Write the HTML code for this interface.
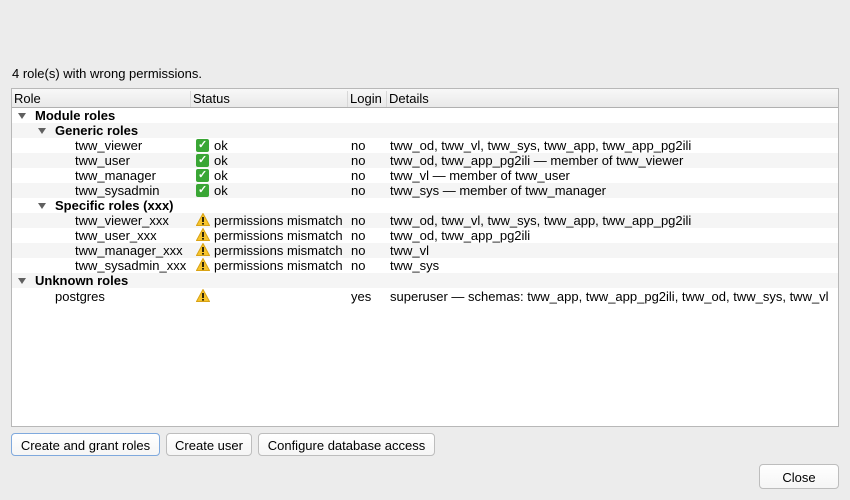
<!DOCTYPE html>
<html><head><meta charset="utf-8"><style>
body{margin:0;width:850px;height:500px;background:#ececec;font-family:"Liberation Sans",Arial,sans-serif;font-size:13px;color:#000;position:relative;overflow:hidden}
.abs{position:absolute}
.frame{left:11px;top:88px;width:826px;height:337px;border:1px solid #b8b8b8;background:#fff}
.hdr{position:absolute;left:0;top:0;width:826px;height:18px;background:linear-gradient(#f8f8f8,#e9e9e9);border-bottom:1px solid #b0b0b0}
.hdr span{position:absolute;top:2px;height:16px;padding-left:2px;border-left:1px solid #d8d8d8}
.row{position:absolute;left:0;width:826px;height:15px;line-height:15px;white-space:nowrap}
.row.g{background:#f5f5f5}
.row span{position:absolute;top:0}
.b{font-weight:bold}
.tri{display:block;width:0;height:0;border-left:4px solid transparent;border-right:4px solid transparent;border-top:6px solid #606060;position:absolute;top:5px}
.ok{display:block;width:13px;height:13px;background:#3aa635;border-radius:2px;position:absolute;top:1px;left:184px}
.warn{position:absolute;left:184px;top:0;display:block}
.btn{position:absolute;height:23px;border:1px solid #bdbdbd;border-radius:4px;background:linear-gradient(#fff,#f5f5f5);text-align:center;line-height:23px;font-size:13px;box-sizing:border-box}
</style></head><body>
<div class="abs" style="left:12px;top:66px">4 role(s) with wrong permissions.</div>
<div class="abs frame">
 <div class="hdr"><span style="left:0;border-left:none">Role</span><span style="left:178px">Status</span><span style="left:335px">Login</span><span style="left:374px">Details</span></div>
 <div class="row" style="top:19px"><i class="tri" style="left:6px"></i><span class="b" style="left:23px">Module roles</span></div>
 <div class="row g" style="top:34px"><i class="tri" style="left:26px"></i><span class="b" style="left:43px">Generic roles</span></div>
 <div class="row" style="top:49px"><span style="left:63px">tww_viewer</span><i class="ok"></i><span style="left:186px;color:#fff;font-size:11px;font-weight:bold">✓</span><span style="left:202px">ok</span><span style="left:339px">no</span><span style="left:378px">tww_od, tww_vl, tww_sys, tww_app, tww_app_pg2ili</span></div>
 <div class="row g" style="top:64px"><span style="left:63px">tww_user</span><i class="ok"></i><span style="left:186px;color:#fff;font-size:11px;font-weight:bold">✓</span><span style="left:202px">ok</span><span style="left:339px">no</span><span style="left:378px">tww_od, tww_app_pg2ili — member of tww_viewer</span></div>
 <div class="row" style="top:79px"><span style="left:63px">tww_manager</span><i class="ok"></i><span style="left:186px;color:#fff;font-size:11px;font-weight:bold">✓</span><span style="left:202px">ok</span><span style="left:339px">no</span><span style="left:378px">tww_vl — member of tww_user</span></div>
 <div class="row g" style="top:94px"><span style="left:63px">tww_sysadmin</span><i class="ok"></i><span style="left:186px;color:#fff;font-size:11px;font-weight:bold">✓</span><span style="left:202px">ok</span><span style="left:339px">no</span><span style="left:378px">tww_sys — member of tww_manager</span></div>
 <div class="row" style="top:109px"><i class="tri" style="left:26px"></i><span class="b" style="left:43px">Specific roles (xxx)</span></div>
 <div class="row g" style="top:124px"><span style="left:63px">tww_viewer_xxx</span><svg class="warn" width="14" height="13"><path d="M7 0.5L13.5 12.5H0.5Z" fill="#f7c42c" stroke="#d9a315"/><rect x="6.2" y="4" width="1.6" height="5" fill="#000"/><rect x="6.2" y="10" width="1.6" height="1.6" fill="#000"/></svg><span style="left:202px">permissions mismatch</span><span style="left:339px">no</span><span style="left:378px">tww_od, tww_vl, tww_sys, tww_app, tww_app_pg2ili</span></div>
 <div class="row" style="top:139px"><span style="left:63px">tww_user_xxx</span><svg class="warn" width="14" height="13"><path d="M7 0.5L13.5 12.5H0.5Z" fill="#f7c42c" stroke="#d9a315"/><rect x="6.2" y="4" width="1.6" height="5" fill="#000"/><rect x="6.2" y="10" width="1.6" height="1.6" fill="#000"/></svg><span style="left:202px">permissions mismatch</span><span style="left:339px">no</span><span style="left:378px">tww_od, tww_app_pg2ili</span></div>
 <div class="row g" style="top:154px"><span style="left:63px">tww_manager_xxx</span><svg class="warn" width="14" height="13"><path d="M7 0.5L13.5 12.5H0.5Z" fill="#f7c42c" stroke="#d9a315"/><rect x="6.2" y="4" width="1.6" height="5" fill="#000"/><rect x="6.2" y="10" width="1.6" height="1.6" fill="#000"/></svg><span style="left:202px">permissions mismatch</span><span style="left:339px">no</span><span style="left:378px">tww_vl</span></div>
 <div class="row" style="top:169px"><span style="left:63px">tww_sysadmin_xxx</span><svg class="warn" width="14" height="13"><path d="M7 0.5L13.5 12.5H0.5Z" fill="#f7c42c" stroke="#d9a315"/><rect x="6.2" y="4" width="1.6" height="5" fill="#000"/><rect x="6.2" y="10" width="1.6" height="1.6" fill="#000"/></svg><span style="left:202px">permissions mismatch</span><span style="left:339px">no</span><span style="left:378px">tww_sys</span></div>
 <div class="row g" style="top:184px"><i class="tri" style="left:6px"></i><span class="b" style="left:23px">Unknown roles</span></div>
 <div class="row" style="top:200px"><span style="left:43px">postgres</span><svg class="warn" width="14" height="13"><path d="M7 0.5L13.5 12.5H0.5Z" fill="#f7c42c" stroke="#d9a315"/><rect x="6.2" y="4" width="1.6" height="5" fill="#000"/><rect x="6.2" y="10" width="1.6" height="1.6" fill="#000"/></svg><span style="left:339px">yes</span><span style="left:378px">superuser — schemas: tww_app, tww_app_pg2ili, tww_od, tww_sys, tww_vl</span></div>
</div>
<div class="btn" style="left:11px;top:433px;width:149px;border-color:#7fa9dd">Create and grant roles</div>
<div class="btn" style="left:166px;top:433px;width:86px">Create user</div>
<div class="btn" style="left:258px;top:433px;width:177px">Configure database access</div>
<div class="btn" style="left:759px;top:464px;width:80px;height:25px;line-height:25px">Close</div>
</body></html>
